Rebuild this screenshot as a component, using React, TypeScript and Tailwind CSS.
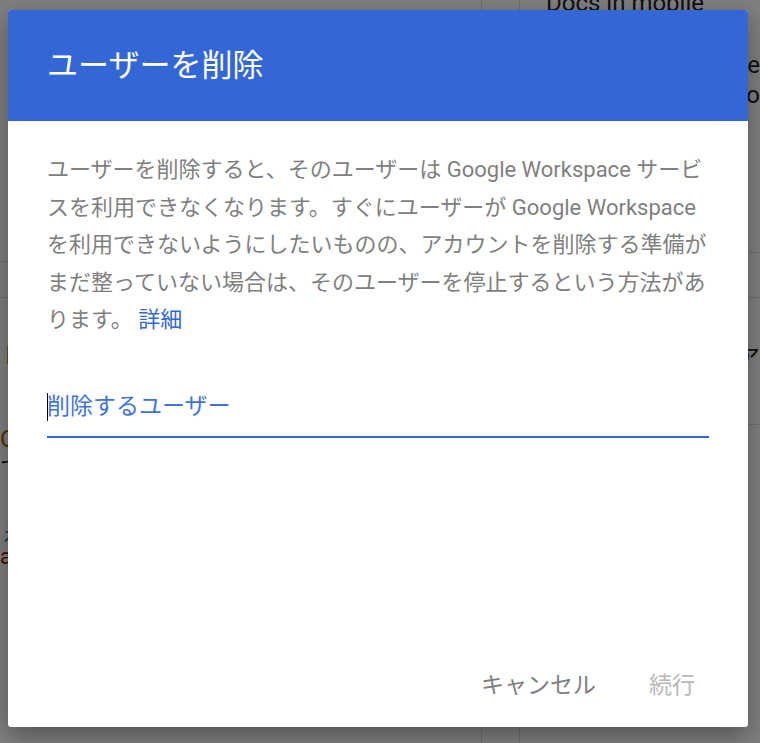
import React from 'react';

const bodyLines = [
  'ユーザーを削除すると、そのユーザーは Google Workspace サービ',
  'スを利用できなくなります。すぐにユーザーが Google Workspace',
  'を利用できないようにしたいものの、アカウントを削除する準備が',
  'まだ整っていない場合は、そのユーザーを停止するという方法があ',
];

// Page behind the dialog; only the edges show through the overlay
const BackgroundPage: React.FC = () => (
  <div className="flex h-full w-full bg-white text-[#202124]">
    <div className="w-[482px] border-r border-[#dadce0] pt-[240px]">
      <div className="h-[22px] border-b border-[#dadce0]" />
      <div className="h-[36px] border-b border-[#dadce0]" />
      <div className="pt-[43px] text-[22px] leading-[30px] text-[#137333]">ト</div>
      <div className="pt-[53px] text-[24px] leading-[30px] text-[#b06000]">O</div>
      <div className="text-[22px] leading-[30px]">て</div>
      <div className="pt-[37px] text-[22px] leading-[24px] text-[#1a73e8]">ぇ</div>
      <div className="text-[22px] leading-[24px] text-[#a50e0e]">al</div>
      <div className="text-[22px] leading-[24px]">・</div>
    </div>
    <div className="w-[38px] border-r border-[#dadce0]" />
    <div className="flex-1">
      <div className="-mt-[12px] pl-[26px] text-[24px] leading-[30px]">Docs in mobile</div>
      <div className="mt-[32px] text-right text-[24px] leading-[30px]">de</div>
      <div className="text-right text-[24px] leading-[30px]">o</div>
      <div className="mt-[142px] h-[46px] border-y border-[#dadce0]" />
      <div className="mt-[45px] text-right text-[24px] leading-[30px]">ア</div>
      <div className="mt-[51px] border-b border-[#dadce0]" />
    </div>
  </div>
);

const App: React.FC = () => {
  return (
    <div
      className="relative h-[743px] w-[760px] overflow-hidden"
      style={{ fontFamily: 'Roboto, "Noto Sans CJK JP", sans-serif' }}
    >
      <BackgroundPage />
      <div className="absolute inset-0 bg-black/50" />

      <div className="absolute inset-0 pl-[8px] pt-[10px]">
        <div className="flex h-[717px] w-[740px] flex-col overflow-hidden rounded-[3px] bg-white shadow-[0_8px_24px_rgba(0,0,0,0.35)]">
          <div className="flex h-[111px] shrink-0 items-center bg-[#3367d6] px-[39px]">
            <h1 className="text-[31px] font-normal leading-[36px] text-white">ユーザーを削除</h1>
          </div>

          <div className="px-[39px] pt-[30px] text-[22px] leading-[37.5px] text-[#7f7f7f]">
            {bodyLines.map((line) => (
              <div key={line} className="whitespace-nowrap">{line}</div>
            ))}
            <div className="whitespace-nowrap">
              ります。 <a href="#" className="text-[#3367d6]">詳細</a>
            </div>
          </div>

          <div className="mx-[39px] mt-[53px]">
            <div className="flex h-[30px] items-center text-[23px] leading-[30px] text-[#3f72dd]">
              <span className="-mr-px inline-block h-[28px] w-px bg-black" />
              <span>削除するユーザー</span>
            </div>
            <div className="mt-[14px] h-[2px] bg-[#3367d6]" />
          </div>

          <div className="mt-auto flex justify-end gap-[53px] pb-[27px] pr-[53px] text-[23px] leading-[28px]">
            <button className="text-[#7f7f7f]">キャンセル</button>
            <button className="text-[#b8b8b8]" disabled>続行</button>
          </div>
        </div>
      </div>
    </div>
  );
};

export default App;
